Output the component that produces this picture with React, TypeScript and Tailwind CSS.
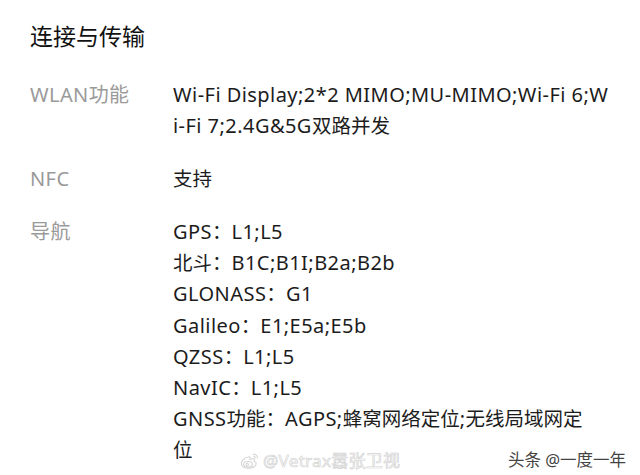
import React from "react";

const font = { fontFamily: '"Noto Sans", "Noto Sans CJK SC", sans-serif' };

function Mixed({ text }: { text: string }) {
  const parts = text.split(/([\u3000-\u9fff\uff00-\uffef]+)/).filter((p) => p.length > 0);
  return (
    <>
      {parts.map((p, i) =>
        /[\u3000-\u9fff\uff00-\uffef]/.test(p) ? (
          <span key={i} className="text-[19.5px] tracking-normal">{p}</span>
        ) : (
          <span key={i} className="text-[20px] tracking-[0.45px]">{p}</span>
        )
      )}
    </>
  );
}

function Row({ label, lines }: { label: string; lines: string[] }) {
  return (
    <div className="flex">
      <div className="w-[143px] shrink-0 text-[20px] leading-[31px] tracking-[0.4px] text-[#9a9a9a]">{label}</div>
      <div className="flex flex-col text-[20px] leading-[31.1px] text-[#1c1c1c]">
        {lines.map((l, i) => (
          <div key={i} className="whitespace-nowrap">
            <Mixed text={l} />
          </div>
        ))}
      </div>
    </div>
  );
}

export default function App() {
  return (
    <div className="relative w-[640px] h-[475px] overflow-hidden bg-white" style={font}>
      <div className="pt-[20px] pl-[30px]">
        <div className="text-[23px] leading-[32px] text-[#111111]">连接与传输</div>
        <div className="mt-[27px] flex flex-col gap-[22px]">
          <Row
            label="WLAN功能"
            lines={["Wi-Fi Display;2*2 MIMO;MU-MIMO;Wi-Fi 6;W", "i-Fi 7;2.4G&5G双路并发"]}
          />
          <Row label="NFC" lines={["支持"]} />
          <Row
            label="导航"
            lines={[
              "GPS：L1;L5",
              "北斗：B1C;B1I;B2a;B2b",
              "GLONASS：G1",
              "Galileo：E1;E5a;E5b",
              "QZSS：L1;L5",
              "NavIC：L1;L5",
              "GNSS功能：AGPS;蜂窝网络定位;无线局域网定",
              "位",
            ]}
          />
        </div>
      </div>
      <div className="absolute left-[240px] top-[451px] flex items-center gap-[3px]">
        <svg width="20" height="18" viewBox="0 0 20 18" fill="none" stroke="#d6d6d6" strokeWidth="1.1">
          <path d="M8 5C4 6 1 9 1.5 12c0.5 3 4 4.5 8 4.2 4.2-0.3 7-2.6 6.6-5-0.3-1.6-2-2-2-2 0.8-1.6 0.2-3-2-2.4L10 7.5C10.6 5.2 10 4.3 8 5z" />
          <ellipse cx="8" cy="12.3" rx="4.5" ry="2.8" />
          <circle cx="7.2" cy="12.5" r="1.2" />
          <path d="M13 2.2c2.5-0.4 4.8 1.6 4.4 4.3" />
          <path d="M13.3 4.3c1.2-0.2 2.2 0.8 2 2" />
        </svg>
        <span className="text-[17px] leading-[20px] tracking-[0.3px] text-white [-webkit-text-stroke:0.7px_#d2d2d2]">@Vetrax嚣张卫视</span>
      </div>
      <div className="absolute left-[508px] top-[449px] text-[16.5px] leading-[22px] text-[#444444]">
        头条 @一度一年
      </div>
    </div>
  );
}
